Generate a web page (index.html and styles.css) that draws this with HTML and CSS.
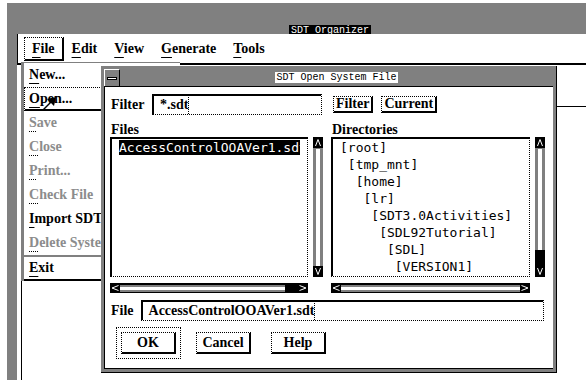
FILE: index.html
```html
<!DOCTYPE html>
<html lang="en">
<head>
    <meta charset="UTF-8">
    <meta name="viewport" content="width=device-width, initial-scale=1.0">
    <title>SDT Organizer</title>
    <link rel="stylesheet" href="styles.css">
</head>
<body>
<div class="screen">

    <!-- main window behind everything -->
    <div class="win">
        <div class="win-title dither"><span class="win-name">SDT Organizer</span></div>
        <div class="win-main">
            <div class="win-edge dither"></div>
            <div class="win-inner">
                <div class="menubar">
                    <span class="mb-item active"><u>F</u>ile</span>
                    <span class="mb-item"><u>E</u>dit</span>
                    <span class="mb-item"><u>V</u>iew</span>
                    <span class="mb-item"><u>G</u>enerate</span>
                    <span class="mb-item"><u>T</u>ools</span>
                </div>
                <div class="workarea">
                    <div class="rule"></div>
                </div>
            </div>
        </div>
    </div>

    <!-- File pulldown -->
    <div class="pulldown dither">
        <div class="pd-inner">
            <div class="pd-item"><u>N</u>ew...</div>
            <div class="pd-item current"><u>O</u>pen...</div>
            <div class="pd-item off"><u>S</u>ave</div>
            <div class="pd-item off"><u>C</u>lose</div>
            <div class="pd-item off"><u>P</u>rint...</div>
            <div class="pd-item off"><u>C</u>heck File</div>
            <div class="pd-item"><u>I</u>mport SDT</div>
            <div class="pd-item off"><u>D</u>elete System</div>
            <div class="pd-sep dither"></div>
            <div class="pd-item last"><u>E</u>xit</div>
        </div>
    </div>

    <svg class="pointer" width="16" height="16" viewBox="0 0 16 16">
        <path d="M15 1 L6 3 L9 6 L1 14 L2 15 L10 7 L13 10 Z" fill="#000"/>
    </svg>

    <!-- Open dialog -->
    <div class="dialog dither">
        <div class="dlg-title">
            <span class="dlg-menu"><span class="dlg-bar"></span></span>
            <span class="dlg-name-wrap"><span class="dlg-name">SDT Open System File</span></span>
        </div>
        <div class="dlg-body">
            <div class="grid">
                <div class="field-row">
                    <span class="lbl">Filter</span>
                    <div class="field filter-field">*.sdt<span class="caret"></span></div>
                </div>
                <div class="btn-row">
                    <span class="btn">Filter</span>
                    <span class="btn">Current</span>
                </div>

                <div class="lbl head">Files</div>
                <div class="lbl head">Directories</div>

                <div class="pane">
                    <div class="list">
                        <div class="clip"><span class="sel">AccessControlOOAVer1.sdt</span></div>
                    </div>
                    <div class="vscroll">
                        <svg class="arrow" width="10" height="11" viewBox="0 0 10 11"><rect width="10" height="11" fill="#000"/><polyline points="2.5,9 5,2.5 7.5,9" fill="none" stroke="#fff"/></svg>
                        <div class="trough dither"><div class="thumb"></div></div>
                        <svg class="arrow" width="10" height="11" viewBox="0 0 10 11"><rect width="10" height="11" fill="#000"/><polyline points="2.5,2 5,8.5 7.5,2" fill="none" stroke="#fff"/></svg>
                    </div>
                </div>
                <div class="pane">
                    <div class="list">
                        <div class="clip dirs">
                            <div>[root]</div>
                            <div> [tmp_mnt]</div>
                            <div>  [home]</div>
                            <div>   [lr]</div>
                            <div>    [SDT3.0Activities]</div>
                            <div>     [SDL92Tutorial]</div>
                            <div>      [SDL]</div>
                            <div>       [VERSION1]</div>
                        </div>
                    </div>
                    <div class="vscroll">
                        <svg class="arrow" width="10" height="11" viewBox="0 0 10 11"><rect width="10" height="11" fill="#000"/><polyline points="2.5,9 5,2.5 7.5,9" fill="none" stroke="#fff"/></svg>
                        <div class="trough dither"><div class="thumb"></div><div class="knob"></div></div>
                        <svg class="arrow" width="10" height="11" viewBox="0 0 10 11"><rect width="10" height="11" fill="#000"/><polyline points="2.5,2 5,8.5 7.5,2" fill="none" stroke="#fff"/></svg>
                    </div>
                </div>

                <div class="hscroll">
                    <svg class="arrow" width="10" height="10" viewBox="0 0 10 10"><rect width="10" height="10" fill="#000"/><polyline points="8.5,2.5 2,5 8.5,7.5" fill="none" stroke="#fff"/></svg>
                    <div class="htrough dither"><div class="hthumb"></div><div class="hknob"></div></div>
                    <svg class="arrow" width="10" height="10" viewBox="0 0 10 10"><rect width="10" height="10" fill="#000"/><polyline points="1.5,2.5 8,5 1.5,7.5" fill="none" stroke="#fff"/></svg>
                </div>
                <div class="hscroll">
                    <svg class="arrow" width="10" height="10" viewBox="0 0 10 10"><rect width="10" height="10" fill="#000"/><polyline points="8.5,2.5 2,5 8.5,7.5" fill="none" stroke="#fff"/></svg>
                    <div class="htrough dither"><div class="hthumb"></div></div>
                    <svg class="arrow" width="10" height="10" viewBox="0 0 10 10"><rect width="10" height="10" fill="#000"/><polyline points="1.5,2.5 8,5 1.5,7.5" fill="none" stroke="#fff"/></svg>
                </div>

                <div class="field-row file-row">
                    <span class="lbl">File</span>
                    <div class="field file-field">AccessControlOOAVer1.sdt<span class="caret"></span></div>
                </div>

                <div class="actions">
                    <span class="push default">OK</span>
                    <span class="push">Cancel</span>
                    <span class="push">Help</span>
                </div>
            </div>
        </div>
    </div>

</div>
</body>
</html>
```

FILE: styles.css
```css
body {
    margin: 0;
    background: #fff;
    color: #000;
    font-family: "Liberation Serif", "Times New Roman", serif;
    font-size: 14px;
    font-weight: bold;
}

.screen { position: relative; width: 586px; height: 380px; overflow: hidden; background: #fff; }

/* the 50% stipple of the old 1-bit screen, as flat grey */
.dither { background-color: #808080; }

u { text-decoration: underline; text-underline-offset: 4px; text-decoration-thickness: 1px; text-decoration-color: #000; }

/* main window */
.win { margin: 3px 0 0 7px; height: 377px; display: flex; flex-direction: column; }
.win-title { height: 31px; box-sizing: border-box; padding: 18px 0 0 282px; flex-shrink: 0; }
.win-name { display: inline-block; background: #000; color: #fff; font: 10px/11px "Liberation Mono", monospace; padding: 0 2px; }
.win-main { flex: 1; display: flex; }
.win-edge { width: 10px; }
.win-inner { flex: 1; display: flex; flex-direction: column; background: #fff; }

.menubar {
    height: 31px;
    box-sizing: border-box;
    border-left: 1px solid #000;
    border-bottom: 2px solid #000;
    padding: 3px 0 0 6px;
    display: flex;
    align-items: flex-start;
}
.mb-item {
    height: 24px;
    box-sizing: border-box;
    padding: 0 7px;
    border-style: solid;
    border-color: transparent;
    border-width: 1px 2px 2px 1px;
    line-height: 21px;
}
.mb-item.active {
    border-left: 1px dotted #000;
    border-top: 1px dotted #000;
    border-right: 2px solid #000;
    border-bottom: 2px solid #000;
}
.workarea { flex: 1; margin-left: 4px; border-left: 1px solid #000; }
.rule { margin-top: 41px; height: 1px; background: #000; }

/* pulldown */
.pulldown { position: absolute; left: 21px; top: 62px; width: 159px; box-sizing: border-box; padding: 1px 0 0 3px; }
.pd-inner { background: #fff; border-bottom: 2px solid #000; }
.pd-item {
    height: 24px;
    box-sizing: border-box;
    padding-left: 4px;
    border-left: 1px solid transparent;
    line-height: 24px;
    white-space: nowrap;
}
.pd-item.current {
    border-left: 1px dotted #000;
    border-top: 1px dotted #000;
    border-bottom: 2px solid #000;
    line-height: 21px;
}
.pd-item.last { height: 22px; line-height: 22px; }
.pd-item.off { color: #8c8c8c; }
.pd-item.off u { text-decoration-style: dotted; }
.pd-sep { height: 2px; }

.pointer { position: absolute; left: 41px; top: 96px; }

/* dialog */
.dialog {
    position: absolute;
    left: 101px;
    top: 66px;
    width: 456px;
    height: 307px;
    box-sizing: border-box;
    padding: 3px;
    border-right: 1px solid #000;
    border-bottom: 1px solid #000;
    display: flex;
    flex-direction: column;
}
.dlg-title { height: 18px; flex-shrink: 0; box-sizing: border-box; border-bottom: 1px solid #000; display: flex; }
.dlg-menu {
    width: 16px;
    box-sizing: border-box;
    border-right: 1px solid #000;
    border-left: 1px solid #fff;
    border-top: 1px solid #fff;
    display: flex;
    align-items: center;
    justify-content: center;
}
.dlg-bar { width: 8px; height: 1px; border: 1px solid #000; background: #fff; }
.dlg-name-wrap { flex: 1; display: flex; align-items: center; justify-content: center; }
.dlg-name { background: #fff; font: 10px/11px "Liberation Mono", monospace; padding: 0 1px; }

.dlg-body { flex: 1; background: #fff; border-left: 1px solid #000; border-bottom: 1px solid #000; padding: 7px 0 0 5px; }
.grid { display: grid; grid-template-columns: 213px 214px; column-gap: 8px; }

.lbl { margin-left: 1px; }
.field-row { display: flex; align-items: center; height: 21px; }
.field {
    box-sizing: border-box;
    height: 21px;
    border-top: 2px solid #000;
    border-left: 2px solid #000;
    border-right: 1px dotted #000;
    border-bottom: 1px dotted #000;
    padding-left: 6px;
    line-height: 18px;
    display: flex;
    align-items: center;
    white-space: nowrap;
    overflow: hidden;
}
.filter-field { width: 170px; margin-left: auto; margin-right: 1px; }
.caret { height: 17px; border-left: 1px dotted #000; }

.btn-row { display: flex; align-items: center; gap: 8px; padding-left: 2px; height: 21px; }
.btn {
    box-sizing: border-box;
    height: 17px;
    padding: 0 2px;
    border-top: 1px dotted #000;
    border-left: 1px dotted #000;
    border-right: 2px solid #000;
    border-bottom: 2px solid #000;
    line-height: 14px;
}

.head { margin-top: 7px; height: 15px; line-height: 15px; }

.pane { display: flex; gap: 5px; height: 140px; }
.list {
    flex: 1;
    box-sizing: border-box;
    border-top: 2px solid #000;
    border-left: 2px solid #000;
    border-right: 1px dotted #000;
    border-bottom: 1px dotted #000;
    overflow: hidden;
    font: 13px "DejaVu Sans Mono", monospace;
}
.clip { margin: 1px 7px 0 7px; overflow: hidden; white-space: nowrap; }
.sel { display: inline-block; background: #000; color: #fff; line-height: 15px; }
.dirs { margin-top: 0; line-height: 17px; }
.dirs div { white-space: pre; }

.vscroll { width: 10px; display: flex; flex-direction: column; }
.arrow { display: block; flex-shrink: 0; }
.trough { flex: 1; display: flex; flex-direction: column; padding: 1px 3px 0; }
.thumb { flex: 1; background: #fff; }
.knob { height: 16px; background: #000; margin: 0 -3px; }

.hscroll { margin-top: 6px; margin-right: 15px; height: 10px; display: flex; }
.htrough { flex: 1; display: flex; border-top: 2px solid #000; border-bottom: 1px solid #000; padding: 2px 0; }
.hthumb { flex: 1; background: #fff; }
.hknob { width: 13px; background: #000; margin: -2px 0; }

.file-row { grid-column: 1 / -1; margin-top: 7px; }
.file-field { flex: 1; margin-left: 7px; margin-right: 1px; }

.actions { grid-column: 1 / -1; margin-top: 11px; display: flex; gap: 20px; padding-left: 11px; }
.push {
    width: 55px;
    height: 22px;
    box-sizing: border-box;
    border-top: 1px dotted #000;
    border-left: 1px dotted #000;
    border-right: 2px solid #000;
    border-bottom: 2px solid #000;
    text-align: center;
    line-height: 19px;
}
.push.default { outline: 1px dotted #000; outline-offset: 4px; }
```
